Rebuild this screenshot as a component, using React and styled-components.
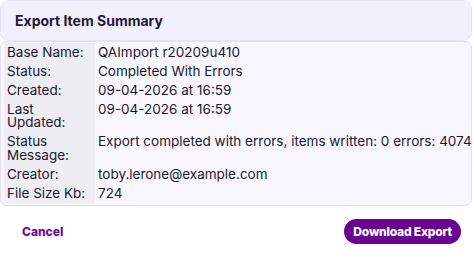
import React from "react";
import styled, { createGlobalStyle } from "styled-components";

// --------------------------------------------------

const GlobalStyle = createGlobalStyle`
	html, body {
		margin: 0;
		padding: 0;
		background: #ffffff;
	}
	body {
		font-family: Inter, "Noto Sans", sans-serif;
	}
`;

const Dialog = styled.div`
	width: 474px;
	height: 258px;
	display: flex;
	flex-direction: column;
	background: #ffffff;
`;

const Header = styled.div`
	height: 41px;
	margin-right: 2px;
	box-sizing: border-box;
	display: flex;
	align-items: center;
	padding: 0 14px;
	background: #f3f0fd;
	border: 1px solid #e6e1fb;
	border-radius: 9px;
	font-size: 14px;
	font-weight: 700;
	color: #1d1838;
`;

const Body = styled.div`
	margin: 0 2px 0 0;
	padding: 1px 3px 2px 3px;
	background: #f8f7ff;
	border: 1px solid #e3defa;
	border-radius: 7px;
`;

const Table = styled.div`
	display: grid;
	grid-template-columns: 91px 1fr;
	font-size: 13.5px;
	line-height: 13.5px;
	color: #1b1830;
`;

const Label = styled.div`
	padding: 2.75px 3px;
	background: #eeedf3;
`;

const Value = styled.div`
	padding: 2.75px 3px;
	white-space: nowrap;
`;

const Footer = styled.div`
	flex: 1;
	display: flex;
	align-items: center;
	justify-content: space-between;
	padding: 0 13px 2px 22px;
`;

const TextButton = styled.button`
	border: none;
	background: none;
	padding: 0;
	font-family: inherit;
	font-size: 12px;
	font-weight: 800;
	color: #6a0d9c;
	cursor: pointer;
`;

const PillButton = styled.button`
	height: 25px;
	padding: 0 9px;
	border: none;
	border-radius: 13px;
	background: #690394;
	font-family: inherit;
	font-size: 12px;
	font-weight: 800;
	letter-spacing: -0.2px;
	color: #ffffff;
	cursor: pointer;
`;

// --------------------------------------------------

const rows = [
	[ "Base Name:", "QAImport r20209u410" ],
	[ "Status:", "Completed With Errors" ],
	[ "Created:", "09-04-2026 at 16:59" ],
	[ "Last Updated:", "09-04-2026 at 16:59" ],
	[ "Status Message:", "Export completed with errors, items written: 0 errors: 4074" ],
	[ "Creator:", "toby.lerone@example.com" ],
	[ "File Size Kb:", "724" ],
];

const App = () => (
	<>
		<GlobalStyle />
		<Dialog>
			<Header>Export Item Summary</Header>
			<Body>
				<Table>
					{ rows.map(([ label, value ]) => (
						<React.Fragment key={ label }>
							<Label>{ label }</Label>
							<Value>{ value }</Value>
						</React.Fragment>
					)) }
				</Table>
			</Body>
			<Footer>
				<TextButton>Cancel</TextButton>
				<PillButton>Download Export</PillButton>
			</Footer>
		</Dialog>
	</>
);

export default App;
